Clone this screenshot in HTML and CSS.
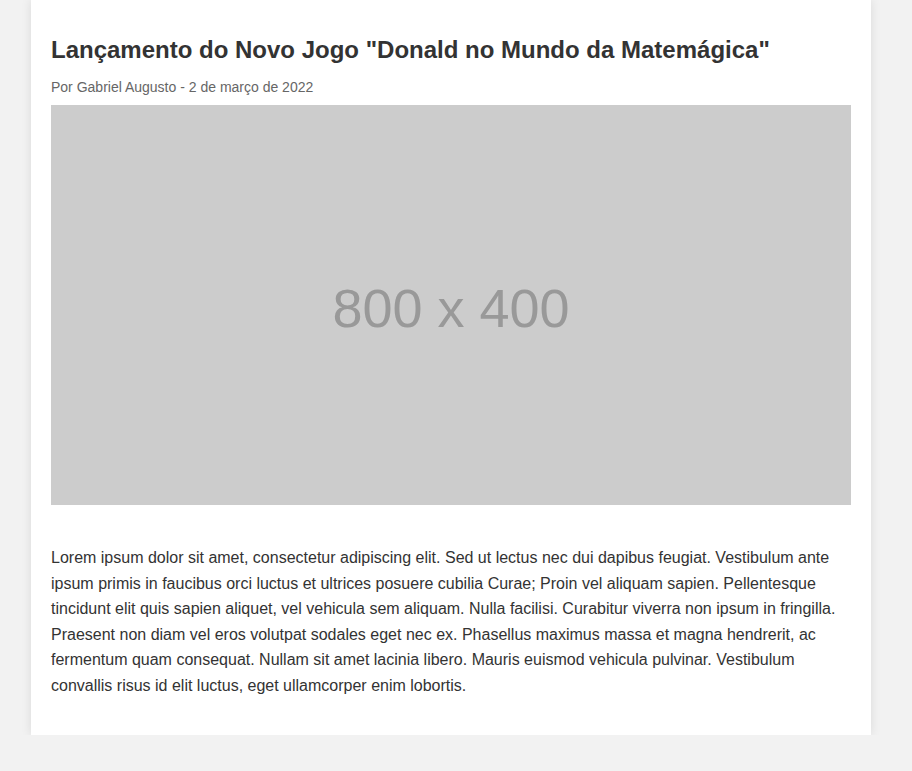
FILE: index.html
```html
<!DOCTYPE html>
<html lang="pt-BR">
<head>
<meta charset="utf-8">
<title>Lançamento do Novo Jogo</title>
<link rel="stylesheet" href="styles.css">
</head>
<body>
<article class="post">
  <h1 class="post-title">Lançamento do Novo Jogo "Donald no Mundo da Matemágica"</h1>
  <p class="post-meta">Por Gabriel Augusto - 2 de março de 2022</p>
  <div class="post-image"><span>800 x 400</span></div>
  <p class="post-body">Lorem ipsum dolor sit amet, consectetur adipiscing elit. Sed ut lectus nec dui dapibus feugiat. Vestibulum ante ipsum primis in faucibus orci luctus et ultrices posuere cubilia Curae; Proin vel aliquam sapien. Pellentesque tincidunt elit quis sapien aliquet, vel vehicula sem aliquam. Nulla facilisi. Curabitur viverra non ipsum in fringilla. Praesent non diam vel eros volutpat sodales eget nec ex. Phasellus maximus massa et magna hendrerit, ac fermentum quam consequat. Nullam sit amet lacinia libero. Mauris euismod vehicula pulvinar. Vestibulum convallis risus id elit luctus, eget ullamcorper enim lobortis.</p>
</article>
</body>
</html>
```
FILE: styles.css
```css
html, body {
  margin: 0;
  padding: 0;
  background: #f2f2f2;
}
body {
  font-family: "Liberation Sans", Arial, sans-serif;
  color: #333;
  padding-left: 31px;
}
.post {
  width: 800px;
  padding: 20px;
  background: #fff;
  box-shadow: 0 0 10px rgba(0, 0, 0, 0.1);
}
.post-title {
  font-size: 24px;
  font-weight: bold;
  margin: 16px 0 15px;
  color: #333;
}
.post-meta {
  font-size: 14px;
  color: #666;
  margin: 0 0 10px;
}
.post-image {
  width: 800px;
  height: 400px;
  background: #ccc;
  display: flex;
  align-items: center;
  justify-content: center;
  margin-bottom: 40px;
}
.post-image span {
  font-size: 54px;
  color: #999;
  padding-top: 6px;
  font-family: "Liberation Sans", Arial, sans-serif;
}
.post-body {
  font-size: 16px;
  line-height: 1.6;
  margin: 0 0 16px;
}
```
